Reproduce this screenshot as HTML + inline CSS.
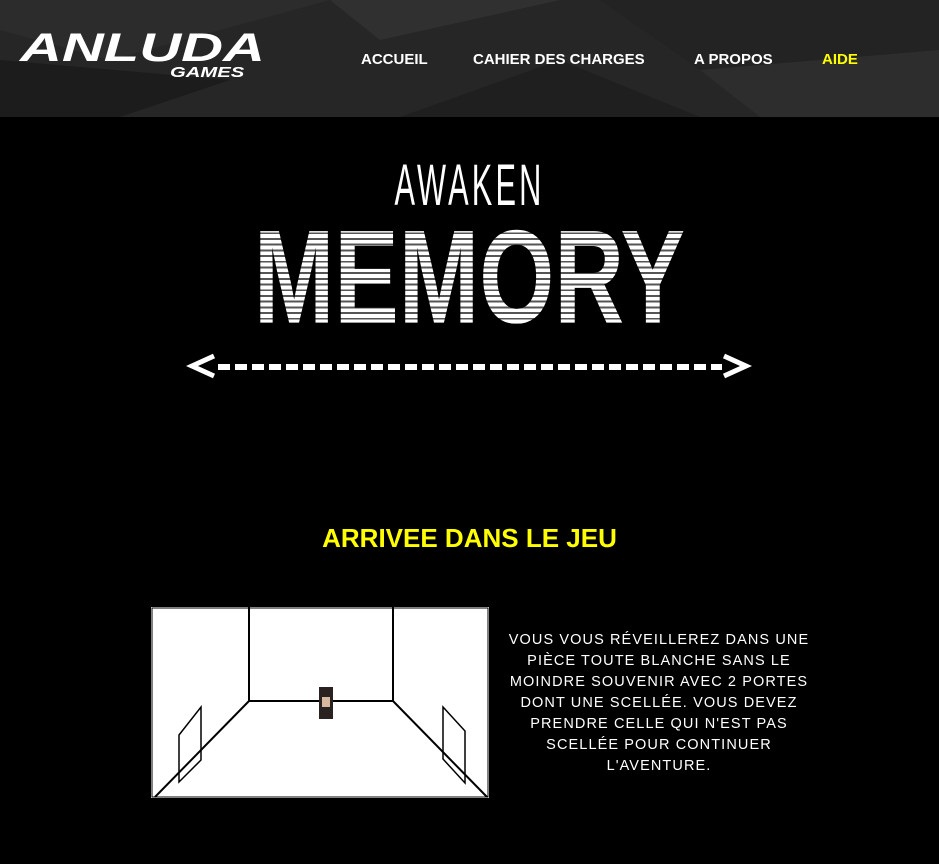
<!DOCTYPE html>
<html><head><meta charset="utf-8"><style>
body{margin:0;width:939px;height:864px;background:#000;overflow:hidden;font-family:"Liberation Sans",sans-serif;position:relative}
.hdr{position:absolute;left:0;top:0;width:939px;height:117px;background:#262626;overflow:hidden}
.nav{position:absolute;top:51px;color:#fff;font-weight:bold;font-size:15px}
.abs{position:absolute}
</style></head><body>
<div class="hdr">
<svg width="939" height="117" style="position:absolute;left:0;top:0">
<polygon points="0,0 330,0 110,60 0,30" fill="#2c2c2c"/>
<polygon points="0,60 230,80 120,117 0,117" fill="#1c1c1c"/>
<polygon points="330,0 560,0 380,40" fill="#303030"/>
<polygon points="600,0 939,0 939,50 700,70" fill="#232323"/>
<polygon points="700,70 939,50 939,117 760,117" fill="#2d2d2d"/>
<polygon points="400,117 560,60 700,117" fill="#1f1f1f"/>
</svg>
<div class="abs" style="left:20px;top:28px;color:#fff;font-weight:bold;font-style:italic;font-size:40px;line-height:40px;transform:scaleX(1.45) scaleY(1.0);transform-origin:left top">ANLUDA</div>
<div class="abs" style="left:170px;top:64px;color:#fff;font-weight:bold;font-style:italic;font-size:15px;transform:scaleX(1.35);transform-origin:left top">GAMES</div>
<div class="nav" style="left:361px">ACCUEIL</div>
<div class="nav" style="left:473px">CAHIER DES CHARGES</div>
<div class="nav" style="left:694px">A PROPOS</div>
<div class="nav" style="left:822px;color:#ffff00">AIDE</div>
</div>
<div class="abs" style="left:0;width:939px;top:152px;text-align:center;color:#fff;font-size:58px;letter-spacing:6px;transform:scaleX(0.53)">AWAKEN</div>
<div class="abs" style="left:0;width:939px;top:202px;text-align:center;font-size:140px;font-weight:bold;line-height:150px">
<span style="background:repeating-linear-gradient(#fff 0 4px,#555 4px 6px);-webkit-background-clip:text;background-clip:text;color:transparent;display:inline-block;transform:scaleX(0.69) scaleY(0.95)">MEMORY</span></div>
<svg class="abs" style="left:186px;top:350px" width="570" height="34">
<polyline points="28,6 6,16 28,26" fill="none" stroke="#fff" stroke-width="5"/>
<polyline points="538,6 560,16 538,26" fill="none" stroke="#fff" stroke-width="5"/>
<line x1="32" y1="17" x2="536" y2="17" stroke="#fff" stroke-width="6" stroke-dasharray="12 5"/>
</svg>
<div class="abs" style="left:0;width:939px;top:523px;text-align:center;color:#ffff00;font-weight:bold;font-size:26px">ARRIVEE DANS LE JEU</div>
<svg class="abs" style="left:151px;top:607px" width="338" height="191">
<rect width="338" height="191" fill="#fff"/>
<g stroke="#000" stroke-width="2" fill="none">
<line x1="98" y1="0" x2="98" y2="94"/><line x1="242" y1="0" x2="242" y2="94"/>
<line x1="98" y1="94" x2="242" y2="94"/>
<line x1="98" y1="94" x2="4" y2="190"/><line x1="242" y1="94" x2="336" y2="190"/>
<polygon points="28,128 50,100 50,153 28,175" stroke-width="1.5"/>
<polygon points="292,100 314,124 314,176 292,152" stroke-width="1.5"/>
<rect x="1" y="1" width="336" height="189" stroke-width="1"/>
</g>
<rect x="168" y="80" width="14" height="32" fill="#2a2220"/>
<rect x="171" y="90" width="8" height="10" fill="#d9b8a0"/>
</svg>
<div class="abs" style="left:490px;width:338px;top:630px;text-align:center;color:#fff;font-size:14.5px;line-height:21px;letter-spacing:1.1px">VOUS VOUS RÉVEILLEREZ DANS UNE<br>PIÈCE TOUTE BLANCHE SANS LE<br>MOINDRE SOUVENIR AVEC 2 PORTES<br>DONT UNE SCELLÉE. VOUS DEVEZ<br>PRENDRE CELLE QUI N'EST PAS<br>SCELLÉE POUR CONTINUER<br>L'AVENTURE.</div>
</body></html>
